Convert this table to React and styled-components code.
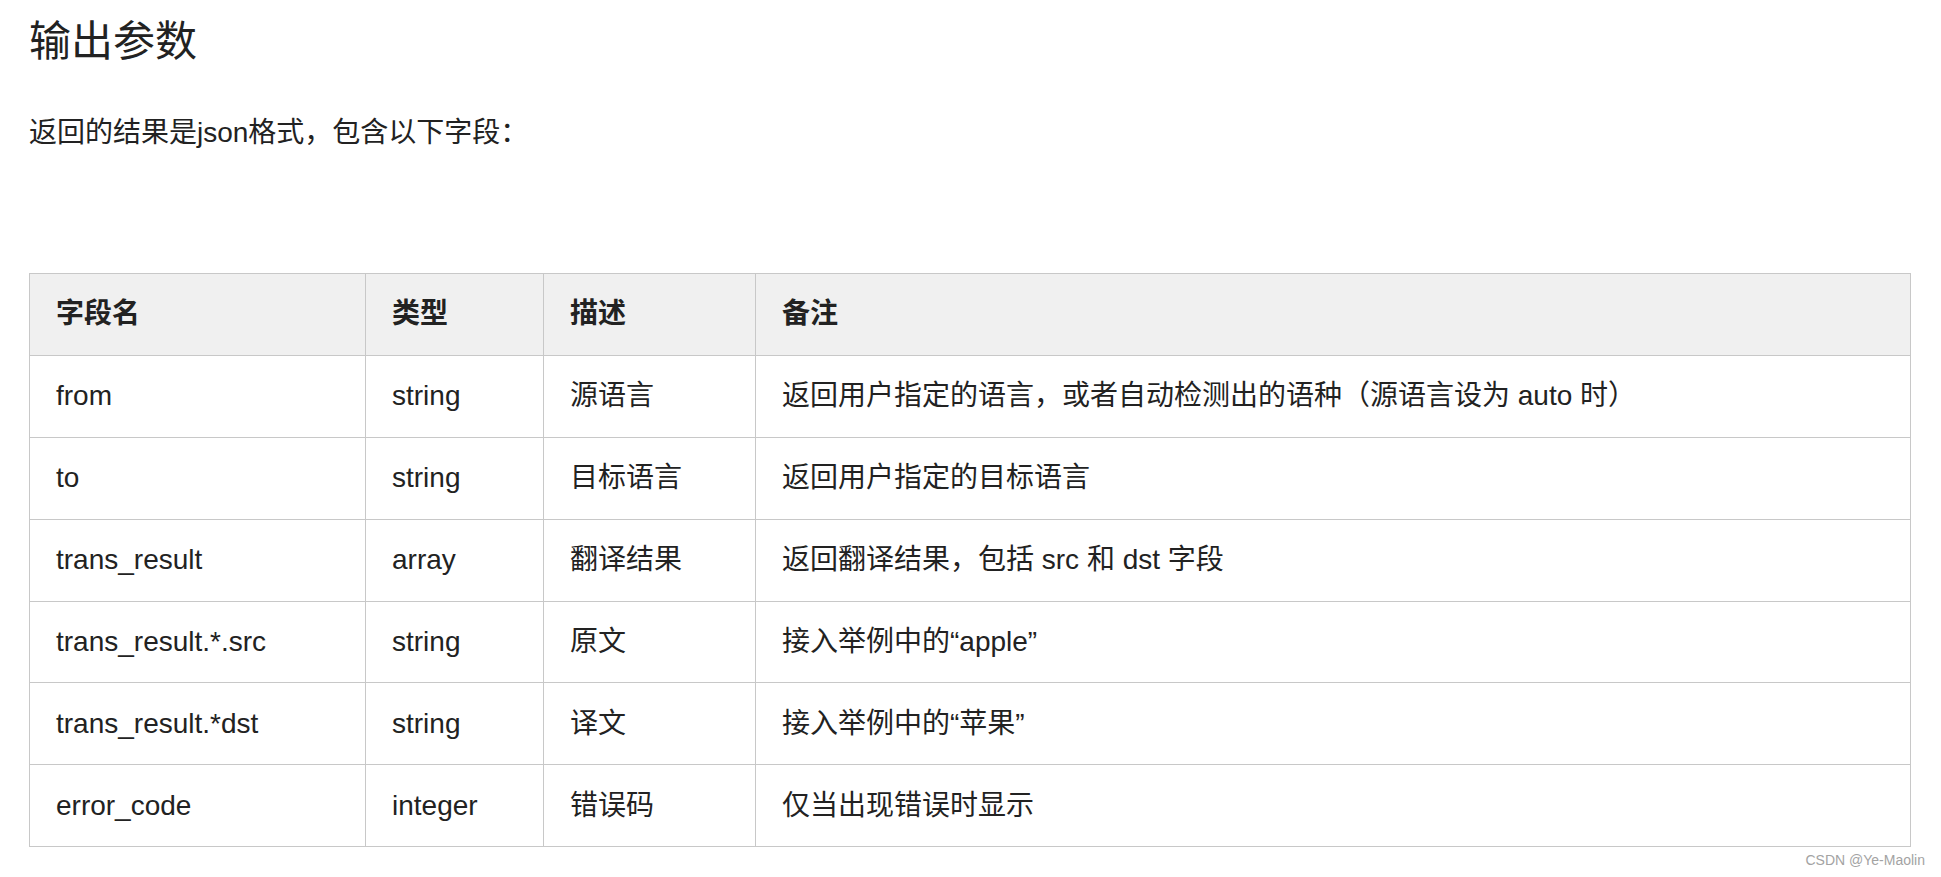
import React from 'react'
import styled, { createGlobalStyle } from 'styled-components'

const GlobalStyle = createGlobalStyle`
    html, body{
        margin: 0;
        padding: 0;
        background: #fff;
    }
    body{
        font-family: "Liberation Sans", "Noto Sans CJK SC", sans-serif;
        color: #222;
    }
`;

const fields = [
    { name: 'from', type: 'string', desc: '源语言', note: '返回用户指定的语言，或者自动检测出的语种（源语言设为 auto 时）' },
    { name: 'to', type: 'string', desc: '目标语言', note: '返回用户指定的目标语言' },
    { name: 'trans_result', type: 'array', desc: '翻译结果', note: '返回翻译结果，包括 src 和 dst 字段' },
    { name: 'trans_result.*.src', type: 'string', desc: '原文', note: '接入举例中的“apple”' },
    { name: 'trans_result.*dst', type: 'string', desc: '译文', note: '接入举例中的“苹果”' },
    { name: 'error_code', type: 'integer', desc: '错误码', note: '仅当出现错误时显示' },
];

const columns = [
    { title: '字段名', width: 336 },
    { title: '类型', width: 178 },
    { title: '描述', width: 212 },
    { title: '备注' },
];

function App() {
    return (
        <PageStyled>
            <GlobalStyle />
            <h1>输出参数</h1>
            <p className="intro">返回的结果是json格式，包含以下字段：</p>
            <FieldTable>
                <colgroup>
                    {columns.map((c) => <Col key={c.title} $width={c.width} />)}
                </colgroup>
                <thead>
                    <tr>
                        {columns.map((c) => <HeadCell key={c.title}>{c.title}</HeadCell>)}
                    </tr>
                </thead>
                <tbody>
                    {fields.map((f) => (
                        <tr key={f.name}>
                            <Cell>{f.name}</Cell>
                            <Cell>{f.type}</Cell>
                            <Cell>{f.desc}</Cell>
                            <Cell>{f.note}</Cell>
                        </tr>
                    ))}
                </tbody>
            </FieldTable>
            <Watermark>CSDN @Ye-Maolin</Watermark>
        </PageStyled>
    )
}

const PageStyled = styled.div`
    position: relative;
    height: 877px;
    overflow: hidden;
    box-sizing: border-box;
    padding: 10px 30px 0 29px;
    h1{
        margin: 0;
        font-size: 42px;
        font-weight: 400;
        line-height: 63px;
        color: #222;
    }
    .intro{
        margin: 39px 0 0;
        font-size: 28px;
        line-height: 42px;
        color: #222;
    }
`;

const FieldTable = styled.table`
    width: 100%;
    margin-top: 119px;
    border-collapse: collapse;
    table-layout: fixed;
    border: 1px solid #c8c8c8;
    font-size: 28px;
    line-height: 42px;
`;

const Col = styled.col`
    width: ${(p) => (p.$width ? `${p.$width}px` : 'auto')};
`;

const HeadCell = styled.th`
    height: 80.9px;
    padding: 0 26px;
    text-align: left;
    font-weight: 700;
    background: #f0f0f0;
    border: 1px solid #c8c8c8;
    color: #222;
`;

const Cell = styled.td`
    height: 80.9px;
    padding: 0 26px;
    border: 1px solid #c8c8c8;
    color: #222;
    white-space: nowrap;
`;

const Watermark = styled.div`
    position: absolute;
    right: 16px;
    bottom: 9px;
    font-size: 14px;
    line-height: 16px;
    color: #a3a3a3;
`;

export default App
